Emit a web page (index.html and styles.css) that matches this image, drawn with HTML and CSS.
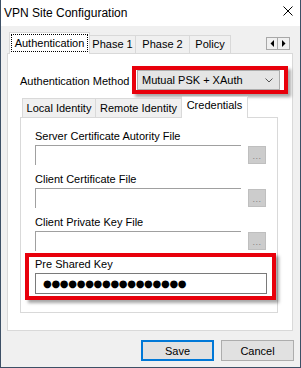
FILE: index.html
```html
<!DOCTYPE html>
<html lang="en">
<head>
  <meta charset="UTF-8">
  <title>VPN Site Configuration</title>
  <link rel="stylesheet" href="styles.css">
</head>
<body>

  <div class="window">
    <!-- Title bar -->
    <div class="titlebar">
      <span class="title">VPN Site Configuration</span>
      <svg class="close" width="10" height="10" viewBox="0 0 10 10">
        <path d="M0.5 0.5 L9.5 9.5 M9.5 0.5 L0.5 9.5" stroke="#000" stroke-width="1" fill="none"/>
      </svg>
    </div>

    <div class="client">
      <!-- Top tabs -->
      <div class="tabs">
        <div class="tab active auth"><span class="focus">Authentication</span></div>
        <div class="tab phase1">Phase 1</div>
        <div class="tab phase2">Phase 2</div>
        <div class="tab policy">Policy</div>
        <div class="scroller">
          <span class="arrow">
            <svg width="4" height="7" viewBox="0 0 4 7"><polygon points="4,0 4,7 0.5,3.5" fill="#000"/></svg>
          </span>
          <span class="arrow">
            <svg width="4" height="7" viewBox="0 0 4 7"><polygon points="0,0 0,7 3.5,3.5" fill="#000"/></svg>
          </span>
        </div>
      </div>

      <div class="panel">
        <!-- Authentication method -->
        <div class="method-row">
          <label class="method-label">Authentication Method</label>
          <div class="highlight method-hl">
            <div class="combo">
              <span>Mutual PSK + XAuth</span>
              <svg width="8" height="5" viewBox="0 0 8 5"><path d="M0.5 0.5 L4 4 L7.5 0.5" stroke="#555" fill="none"/></svg>
            </div>
          </div>
        </div>

        <!-- Inner tabs -->
        <div class="subtabs">
          <div class="subtab local">Local Identity</div>
          <div class="subtab remote">Remote Identity</div>
          <div class="subtab active creds">Credentials</div>
        </div>

        <div class="subpanel">
          <div class="field">
            <div class="field-label">Server Certificate Autority File</div>
            <div class="file-row">
              <div class="file-input"></div>
              <div class="browse">...</div>
            </div>
          </div>
          <div class="field">
            <div class="field-label">Client Certificate File</div>
            <div class="file-row">
              <div class="file-input"></div>
              <div class="browse">...</div>
            </div>
          </div>
          <div class="field">
            <div class="field-label">Client Private Key File</div>
            <div class="file-row">
              <div class="file-input"></div>
              <div class="browse">...</div>
            </div>
          </div>

          <!-- Pre shared key -->
          <div class="highlight psk">
            <div class="field-label">Pre Shared Key</div>
            <div class="password">●●●●●●●●●●●●●●●●●</div>
          </div>
        </div>
      </div>

      <!-- Dialog buttons -->
      <div class="actions">
        <button class="btn default">Save</button>
        <button class="btn">Cancel</button>
      </div>
    </div>
  </div>

</body>
</html>
```

FILE: styles.css
```css
/* Base */
* {
  box-sizing: border-box;
}

body {
  margin: 0;
  font-family: 'Liberation Sans', Arial, sans-serif;
  font-size: 11px;
  color: #000;
  background: #f0f0f0;
}

.window {
  width: 301px;
  height: 368px;
  border: 1px solid #3d5066;
  border-top: 0;
  background: #f0f0f0;
  display: flex;
  flex-direction: column;
}

/* Title bar */
.titlebar {
  height: 26px;
  flex: none;
  background: #fff;
  display: flex;
  align-items: center;
  justify-content: space-between;
  padding: 0 7px 0 3px;
  font-size: 12px;
}

.close {
  display: block;
  margin-top: -5px;
}

/* Top tab strip */
.tabs {
  display: flex;
  align-items: flex-end;
  height: 22px;
  margin: 6px 0 0 8px;
  position: relative;
  z-index: 1;
}

.tab {
  height: 18px;
  margin-bottom: 1px;
  border: 1px solid #d9d9d9;
  border-bottom: 0;
  background: #f0f0f0;
  display: flex;
  align-items: center;
  justify-content: center;
  line-height: 13px;
}

.tab + .tab {
  border-left: 0;
}

.tab.active {
  height: 22px;
  margin-bottom: 0;
  background: #fff;
  align-items: flex-start;
}

.auth { width: 81px; }
.phase1 { width: 46px; }
.phase2 { width: 54px; }
.policy { width: 41px; }

.focus {
  display: block;
  width: 77px;
  height: 18px;
  margin-top: 1px;
  padding-top: 2px;
  border: 1px dotted #000;
  text-align: center;
}

.scroller {
  align-self: flex-start;
  display: flex;
  margin: 5px 10px 0 auto;
}

.arrow {
  width: 12px;
  height: 13px;
  border: 1px solid #a8a8a8;
  background: #f0f0f0;
  display: flex;
  align-items: center;
  justify-content: center;
}

.arrow + .arrow {
  border-left: 0;
}

/* Main panel */
.panel {
  margin: -1px 0 0 6px;
  width: 286px;
  height: 278px;
  flex: none;
  border: 1px solid #d9d9d9;
  background: #fff;
  padding: 12px 0 0 12px;
}

.method-row {
  display: flex;
  align-items: center;
  height: 28px;
}

.method-label {
  width: 112px;
  padding-top: 2px;
}

/* Red annotation frames */
.highlight {
  border: 4px solid #e8000b;
  box-shadow: 3px 3px 3px rgba(0, 0, 0, 0.35);
}

.method-hl {
  width: 156px;
  height: 28px;
  padding-left: 1px;
}

.combo {
  width: 143px;
  height: 20px;
  background: #e5e5e5;
  border: 1px solid #adadad;
  display: flex;
  align-items: center;
  justify-content: space-between;
  padding: 1px 6px 0 4px;
  line-height: 13px;
}

/* Inner tabs */
.subtabs {
  display: flex;
  align-items: flex-end;
  height: 22px;
  margin: 2px 0 0 2px;
  position: relative;
  z-index: 1;
}

.subtab {
  height: 19px;
  margin-bottom: 1px;
  border: 1px solid #d9d9d9;
  border-bottom: 0;
  background: #f0f0f0;
  display: flex;
  align-items: center;
  justify-content: center;
  line-height: 13px;
}

.subtab + .subtab {
  border-left: 0;
}

.subtab.active {
  height: 22px;
  margin-bottom: 0;
  background: #fff;
  align-items: flex-start;
  padding-top: 2px;
}

.local { width: 74px; }
.remote { width: 86px; }
.creds { width: 66px; }

.subpanel {
  margin-top: -1px;
  width: 258px;
  height: 196px;
  border: 1px solid #d9d9d9;
  background: #fff;
  padding: 12px 0 0 14px;
}

.field + .field {
  margin-top: 8px;
}

.field-label {
  line-height: 13px;
  margin-bottom: 2px;
}

.file-row {
  display: flex;
  gap: 7px;
}

.file-input {
  width: 206px;
  height: 20px;
  border-top: 1px solid #a0a0a0;
  border-left: 1px solid #a0a0a0;
}

.browse {
  width: 18px;
  height: 18px;
  margin-top: 1px;
  background: #cccccc;
  border: 1px solid #bfbfbf;
  color: #838383;
  font-size: 9px;
  line-height: 9px;
  display: flex;
  align-items: flex-end;
  justify-content: center;
  padding-bottom: 2px;
  letter-spacing: 0.5px;
}

.psk {
  margin: 2px 0 0 -10px;
  width: 251px;
  padding: 1px 0 2px 6px;
}

.password {
  width: 232px;
  height: 21px;
  border: 1px solid #7a7a7a;
  padding-left: 7px;
  font-family: 'DejaVu Sans', sans-serif;
  font-size: 10px;
  line-height: 19px;
  letter-spacing: -0.3px;
}

/* Bottom buttons */
.actions {
  display: flex;
  justify-content: flex-end;
  gap: 7px;
  margin: 9px 6px 0 0;
}

.btn {
  width: 73px;
  height: 21px;
  padding: 0;
  font-family: inherit;
  font-size: 11px;
  color: #000;
  background: #e1e1e1;
  border: 1px solid #adadad;
}

.btn.default {
  border: 2px solid #0078d7;
}
```
